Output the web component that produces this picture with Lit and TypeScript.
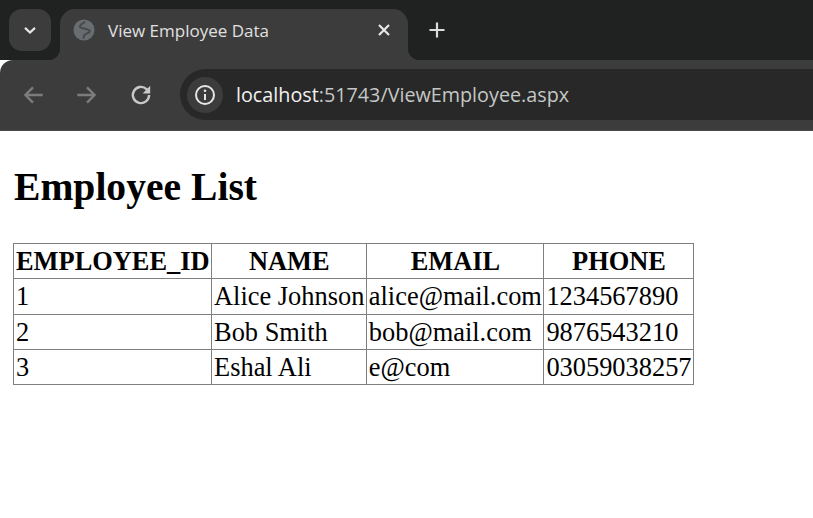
import { LitElement, html, css, svg } from 'lit';
import { customElement } from 'lit/decorators.js';

const employees = [
  { id: '1', name: 'Alice Johnson', email: 'alice@mail.com', phone: '1234567890' },
  { id: '2', name: 'Bob Smith', email: 'bob@mail.com', phone: '9876543210' },
  { id: '3', name: 'Eshal Ali', email: 'e@com', phone: '03059038257' },
];

const icon = (size: number, body: unknown) => html`
  <svg width="${size}" height="${size}" viewBox="0 0 24 24" fill="none">${body}</svg>
`;

@customElement('app-root')
export class AppRoot extends LitElement {
  static styles = css`
    :host {
      display: block;
      width: 813px;
      height: 518px;
      overflow: hidden;
      background: #fff;
    }
    .strip {
      display: flex;
      align-items: flex-start;
      height: 60px;
      box-sizing: border-box;
      padding: 9px 0 0 9px;
      background: #202222;
    }
    .collapse {
      display: flex;
      align-items: center;
      justify-content: center;
      width: 42px;
      height: 42px;
      border-radius: 13px;
      background: #3c3c3c;
    }
    .tab {
      position: relative;
      display: flex;
      align-items: center;
      box-sizing: border-box;
      width: 348px;
      height: 51px;
      margin-left: 9px;
      padding: 0 13px 9px 12px;
      border-radius: 15px 15px 0 0;
      background: #3c3c3c;
    }
    .tab::before,
    .tab::after {
      content: '';
      position: absolute;
      bottom: 0;
      width: 12px;
      height: 12px;
    }
    .tab::before {
      left: -12px;
      background: radial-gradient(circle at 0 0, transparent 12px, #3c3c3c 12.5px);
    }
    .tab::after {
      right: -12px;
      background: radial-gradient(circle at 100% 0, transparent 12px, #3c3c3c 12.5px);
    }
    .title {
      flex: 1;
      margin-left: 12px;
      font: 17px 'Open Sans', sans-serif;
      color: #e0e0e0;
      white-space: nowrap;
    }
    .close {
      display: flex;
      margin-left: -1px;
      margin-right: 1px;
    }
    .plus {
      display: flex;
      margin: 9px 0 0 17px;
    }
    .toolbar {
      display: flex;
      align-items: center;
      height: 71px;
      box-sizing: border-box;
      padding: 0 0 1px 18px;
      border-radius: 13px 0 0 0;
      border-bottom: 1px solid #4a4a4a;
      background: #3c3c3c;
    }
    .nav {
      display: flex;
      align-items: center;
      justify-content: center;
      width: 30px;
      height: 30px;
      margin-right: 24px;
    }
    .omnibox {
      flex: 1;
      display: flex;
      align-items: center;
      height: 51px;
      padding-left: 7px;
      border-radius: 26px 0 0 26px;
      background: #282828;
    }
    .chip {
      display: flex;
      align-items: center;
      justify-content: center;
      width: 36px;
      height: 36px;
      border-radius: 50%;
      background: #3c3c3c;
    }
    .url {
      margin-left: 13px;
      font: 19.75px 'Open Sans', sans-serif;
      color: #c4c7c5;
      white-space: nowrap;
    }
    .url b {
      font-weight: 400;
      color: #f1f1f1;
    }
    main {
      padding: 0 13px;
      font-family: 'Liberation Serif', 'Times New Roman', serif;
      color: #000;
    }
    h1 {
      margin: 0;
      padding: 33px 1px 0;
      height: 79px;
      box-sizing: border-box;
      font-size: 39.6px;
      line-height: 46px;
      font-weight: 700;
    }
    .page-gap {
      height: 33px;
    }
    table {
      border-collapse: collapse;
      font-size: 26.4px;
      line-height: 30.25px;
    }
    th,
    td {
      padding: 2px 1.5px 2px 2px;
      border: 1px solid #808080;
      white-space: nowrap;
    }
    th {
      text-align: center;
      font-weight: 700;
    }
    td {
      text-align: left;
    }
  `;

  render() {
    return html`
      <div class="strip">
        <div class="collapse">
          ${icon(20, svg`<path d="M6 9.500l6 5.500 6-5.500" stroke="#e6e6e6" stroke-width="2.600"/>`)}
        </div>
        <div class="tab">
          ${icon(24, svg`
            <circle cx="12" cy="12" r="10.500" fill="#696c71"/>
            <path d="M13 3.500C11 6 8 6 8 8.500s6 1.500 9.500 4c1.500 1.500-3 3-4.500 4s-1.500 2.500-1.500 4" stroke="#3c3c3c" stroke-opacity=".75" stroke-width="2"/>
          `)}
          <span class="title">View Employee Data</span>
          <span class="close">
            ${icon(20, svg`<path d="M6 6l12 12M18 6L6 18" stroke="#e8e8e8" stroke-width="2.600"/>`)}
          </span>
        </div>
        <span class="plus">
          ${icon(24, svg`<path d="M12 4.500v15M4.500 12h15" stroke="#dcdcdc" stroke-width="2.200"/>`)}
        </span>
      </div>
      <div class="toolbar">
        <span class="nav">
          ${icon(26, svg`<path d="M21 12H5M12 5l-7 7 7 7" stroke="#7c7c7c" stroke-width="2.200"/>`)}
        </span>
        <span class="nav">
          ${icon(26, svg`<path d="M3 12h16M12 5l7 7-7 7" stroke="#7c7c7c" stroke-width="2.200"/>`)}
        </span>
        <span class="nav">
          ${icon(26, svg`
            <path d="M19.500 12a7.500 7.500 0 1 1-2.400-5.500L19.500 9" stroke="#c8c8c8" stroke-width="2.200"/>
            <path d="M20.500 3.500v7h-7z" fill="#c8c8c8"/>
          `)}
        </span>
        <div class="omnibox">
          <span class="chip">
            ${icon(24, svg`
              <circle cx="12" cy="12" r="9" stroke="#e6e6e6" stroke-width="2"/>
              <path d="M12 11v6" stroke="#e6e6e6" stroke-width="2"/>
              <circle cx="12" cy="7.800" r="1.300" fill="#e6e6e6"/>
            `)}
          </span>
          <span class="url"><b>localhost</b>:51743/ViewEmployee.aspx</span>
        </div>
      </div>
      <main>
        <h1>Employee List</h1>
        <div class="page-gap"></div>
        <table>
          <tr><th>EMPLOYEE_ID</th><th>NAME</th><th>EMAIL</th><th>PHONE</th></tr>
          ${employees.map(
            (e) => html`<tr><td>${e.id}</td><td>${e.name}</td><td>${e.email}</td><td>${e.phone}</td></tr>`
          )}
        </table>
      </main>
    `;
  }
}
